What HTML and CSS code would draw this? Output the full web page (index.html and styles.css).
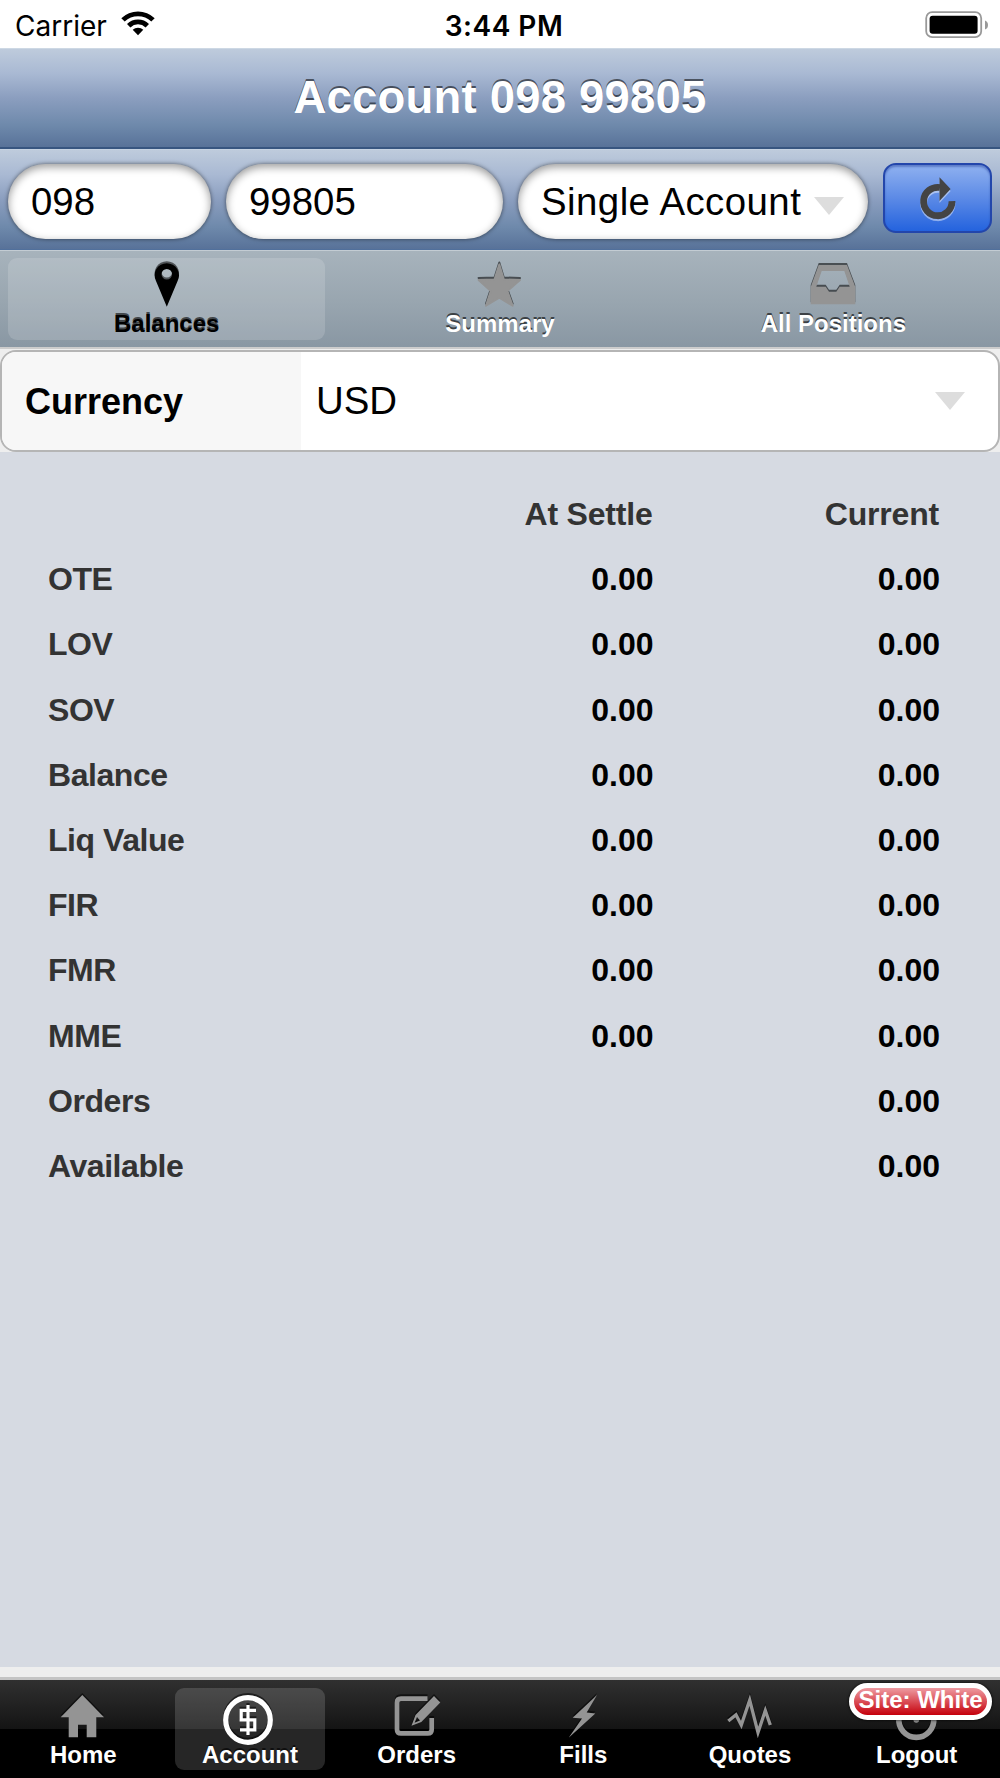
FILE: index.html
```html
<!DOCTYPE html>
<html lang="en">
<head>
  <meta charset="UTF-8">
  <meta name="viewport" content="width=device-width, initial-scale=1.0">
  <title>Account</title>
  <link rel="stylesheet" href="styles.css">
</head>
<body>
  <div class="status">
    <div class="carrier">
      <span>Carrier</span>
      <svg class="wifi" viewBox="0 0 34 25" width="34" height="25">
        <path d="M0.3 7.2 A24 24 0 0 1 33.7 7.2 L30.3 10.6 A19 19 0 0 0 3.7 10.6 Z"/>
        <path d="M6 13 A16 16 0 0 1 28 13 L24.6 16.4 A11 11 0 0 0 9.4 16.4 Z"/>
        <path d="M11.7 18.8 A7.6 7.6 0 0 1 22.3 18.8 L17 24.2 Z"/>
      </svg>
    </div>
    <span class="time">3:44 PM</span>
    <svg class="battery" viewBox="0 0 64 28" width="64" height="28">
      <rect x="1.2" y="1.2" width="55" height="25" rx="6" fill="none" stroke="#999" stroke-width="1.8"/>
      <rect x="4.6" y="4.7" width="48" height="18" rx="3"/>
      <path d="M60 9.5 Q63 10.5 63 14 Q63 17.5 60 18.5 Z" fill="#999"/>
    </svg>
  </div>

  <header class="toolbar">
    <h1>Account 098 99805</h1>
  </header>

  <form class="search">
    <input class="pill office" type="text" value="098">
    <input class="pill number" type="text" value="99805">
    <div class="pill type">Single Account <span class="arrow"></span></div>
    <button class="refresh" type="button">
      <svg viewBox="0 0 40 48" width="40" height="48">
        <path d="M34 27.2 A14.2 14.2 0 1 1 22 13.5" fill="none" stroke="#444" stroke-width="6.8"/>
        <path d="M21.5 3.3 L32.6 15 L21.5 27 Z" fill="#444"/>
      </svg>
    </button>
  </form>

  <nav class="tabs top-tabs">
    <a class="tab active">
      <svg class="icon" viewBox="0 0 52 52">
        <path fill-rule="evenodd" d="M25.8 48.7 L15 23 A12.2 12.2 0 1 1 36.6 23 Z M25.8 11 A5.3 5.3 0 1 0 25.8 21.6 A5.3 5.3 0 1 0 25.8 11 Z"/>
      </svg>
      <span>Balances</span>
    </a>
    <a class="tab">
      <svg class="icon" viewBox="0 0 52 52">
        <path class="star" d="M25.3 6.5 L29.8 21.5 L46 22 L33.4 33 L38.6 47.7 L25.3 39.7 L12 47.7 L16.8 33 L4.6 22 L20.5 21.5 Z"/>
      </svg>
      <span>Summary</span>
    </a>
    <a class="tab">
      <svg class="icon" viewBox="0 0 52 52">
        <path fill-rule="evenodd" d="M11.7 7 H40 L48.3 29 V46.3 H3.7 V29 Z M14.7 13 L9.3 28.7 H18.7 L22 33.7 H29.3 L32.7 28.7 H42.7 L37.3 13 Z"/>
      </svg>
      <span>All Positions</span>
    </a>
  </nav>

  <div class="field-wrap">
    <div class="field">
      <label>Currency</label>
      <div class="value">USD <span class="arrow"></span></div>
    </div>
  </div>

  <main>
    <table>
      <tr class="head"><th></th><th>At Settle</th><th>Current</th></tr>
      <tr><th>OTE</th><td>0.00</td><td>0.00</td></tr>
      <tr><th>LOV</th><td>0.00</td><td>0.00</td></tr>
      <tr><th>SOV</th><td>0.00</td><td>0.00</td></tr>
      <tr><th>Balance</th><td>0.00</td><td>0.00</td></tr>
      <tr><th>Liq Value</th><td>0.00</td><td>0.00</td></tr>
      <tr><th>FIR</th><td>0.00</td><td>0.00</td></tr>
      <tr><th>FMR</th><td>0.00</td><td>0.00</td></tr>
      <tr><th>MME</th><td>0.00</td><td>0.00</td></tr>
      <tr><th>Orders</th><td></td><td>0.00</td></tr>
      <tr><th>Available</th><td></td><td>0.00</td></tr>
    </table>
  </main>

  <nav class="tabs bottom-tabs">
    <a class="tab">
      <svg class="icon" viewBox="0 0 52 52">
        <path d="M25.3 6 L47 28.3 H39.3 V48.3 H29.7 V35.7 H21 V48.3 H11.7 V28.3 H3.7 Z"/>
      </svg>
      <span>Home</span>
    </a>
    <a class="tab active">
      <svg class="icon line" viewBox="0 0 52 52">
        <circle cx="24" cy="31" r="22.3" stroke-width="5.2"/>
        <path d="M32 21.3 H17.2 V30.8 H30.8 V40.8 H16 M24 16 V46" stroke-width="3.2"/>
      </svg>
      <span>Account</span>
    </a>
    <a class="tab">
      <svg class="icon" viewBox="0 0 52 52">
        <path class="stroke" d="M36.5 9.7 H10 Q6 9.7 6 13.7 V40.4 Q6 44.4 10 44.4 H36.7 Q40.7 44.4 40.7 40.4 V29" stroke-width="4.7"/>
        <path fill-rule="evenodd" d="M43 7 L49.3 13.5 L30.3 33 L20.5 36.8 L24.5 26 Z M26 28 L23.6 33.8 L29 31.5 Z"/>
      </svg>
      <span>Orders</span>
    </a>
    <a class="tab">
      <svg class="icon" viewBox="0 0 52 52">
        <path d="M40 6 L15.7 28.7 L25 29.5 L11.7 48.7 L38.3 24.5 L29.7 23.5 Z"/>
      </svg>
      <span>Fills</span>
    </a>
    <a class="tab">
      <svg class="icon line" viewBox="0 0 52 52">
        <path d="M4.3 32 L12 25.7 L17.3 36 L25.7 11 L34 43.5 L41.3 21.5 L46.3 36" stroke-width="3.3" stroke-miterlimit="10"/>
      </svg>
      <span>Quotes</span>
    </a>
    <a class="tab">
      <svg class="icon line" viewBox="0 0 52 52">
        <path d="M15 16.7 A17.5 17.5 0 1 0 35.6 16.7" stroke-width="5.6"/>
        <path d="M25.3 12 V31" stroke-width="5.6" stroke-linecap="round"/>
      </svg>
      <span>Logout</span>
      <b class="badge">Site: White</b>
    </a>
  </nav>
</body>
</html>
```

FILE: styles.css
```css
* {
  box-sizing: border-box;
}

body {
  margin: 0;
  height: 1778px;
  display: flex;
  flex-direction: column;
  background: #eee;
  color: #000;
  font-family: "Liberation Sans", Helvetica, Arial, sans-serif;
}

/* status bar */
.status {
  height: 48px;
  padding: 3px 11px 0 15px;
  display: grid;
  grid-template-columns: 1fr auto 1fr;
  align-items: center;
  background: #fff;
  font-family: Inter, sans-serif;
  font-size: 28px;
}

.carrier {
  display: flex;
  align-items: center;
  gap: 14px;
}

.wifi {
  margin-top: -4px;
}

.time {
  margin-left: 4px;
  font-weight: 600;
  font-size: 28px;
  letter-spacing: 0.5px;
}

.battery {
  justify-self: end;
  margin-top: -2px;
}

/* title and account search */
.toolbar,
.search {
  background: linear-gradient(#becbdc 0%, #a9b9d3 25%, #8b9ebf 50%, #6e89ab 78%, #587299 100%);
}

.toolbar {
  height: 101px;
  border-top: 1px solid #cdd8e4;
  border-bottom: 2px solid #375580;
}

h1 {
  margin: 0;
  color: #fff;
  font-size: 45.5px;
  letter-spacing: 0.2px;
  line-height: 97px;
  text-align: center;
  text-shadow: 0 -2px 0 rgba(0, 0, 0, 0.55);
}

.search {
  height: 101px;
  padding: 13px 8px 0;
  display: flex;
  align-items: flex-start;
  gap: 15px;
  border-top: 1px solid #c5d2e2;
  border-bottom: 1px solid #51709c;
}

.pill {
  height: 75px;
  margin-top: 1px;
  padding: 0 23px;
  border: 0;
  border-radius: 38px;
  background: #fff;
  color: #000;
  font-family: inherit;
  font-size: 38.4px;
  line-height: 73px;
  box-shadow: 0 0 4px rgba(0, 0, 0, 0.55), inset 0 3px 8px rgba(0, 0, 0, 0.4);
}

.office {
  width: 203px;
}

.number {
  width: 277px;
}

.type {
  width: 350px;
  display: flex;
  align-items: center;
  gap: 13px;
  letter-spacing: 0.45px;
  white-space: nowrap;
}

.arrow {
  border: 15px solid transparent;
  border-top: 18px solid #ddd;
  border-bottom: 0;
}

.type .arrow {
  margin-top: 8px;
}

.refresh {
  flex: 1;
  height: 70px;
  padding: 0;
  display: flex;
  align-items: center;
  justify-content: center;
  border: 2px solid #2346ab;
  border-radius: 13px;
  background: linear-gradient(#8fb1f0, #5c8ae6 50%, #2463de);
  box-shadow: inset 0 2px 2px rgba(30, 60, 150, 0.45);
}

.refresh svg {
  filter: drop-shadow(0 2px 0 rgba(255, 255, 255, 0.45));
}

/* tab bars */
.tabs {
  height: 97px;
  display: grid;
  grid-auto-flow: column;
  grid-auto-columns: 1fr;
}

.tab {
  position: relative;
  height: 82px;
  margin: 8px 8px 0;
  padding-top: 1px;
  display: flex;
  flex-direction: column;
  align-items: center;
  border-radius: 9px;
  color: #fff;
  fill: #949494;
  font-size: 24px;
  font-weight: bold;
  line-height: 28px;
  text-shadow: 0 -2px 0 rgba(0, 0, 0, 0.6);
}

.icon {
  width: 52px;
  height: 52px;
  flex: none;
  overflow: visible;
  filter: drop-shadow(0 -2px 0 rgba(0, 0, 0, 0.55));
}

.line,
.stroke {
  fill: none;
  stroke: #949494;
}

.star {
  stroke: #949494;
  stroke-width: 2px;
  stroke-linejoin: round;
}

.top-tabs {
  border-top: 1px solid #c3ccd3;
  background: linear-gradient(#a7b3bc, #98a5af 55%, #8997a3);
}

.top-tabs .tab {
  margin-top: 7px;
  padding-top: 0;
}

.top-tabs .active {
  background: rgba(255, 255, 255, 0.15);
  color: #000;
  fill: #000;
}

.badge {
  position: absolute;
  top: -5px;
  right: 0;
  width: 143px;
  height: 37px;
  border: 5px solid #fff;
  border-radius: 19px;
  background: linear-gradient(#ee9ba1, #da4d56 50%, #c5000c);
  line-height: 24px;
  text-align: center;
  text-shadow: none;
  white-space: nowrap;
  box-shadow: 0 0 3px #000;
}

/* currency */
.field-wrap {
  height: 105px;
  padding-top: 1px;
  border-top: 2px solid #ccc;
}

.field {
  height: 102px;
  display: flex;
  overflow: hidden;
  border: 2px solid #b5b5b5;
  border-radius: 16px;
  background: #fff;
  line-height: 98px;
}

.field label {
  width: 299px;
  padding-left: 23px;
  background: #f7f7f7;
  font-size: 36px;
  font-weight: bold;
  line-height: 100px;
}

.value {
  flex: 1;
  padding: 0 33px 0 15px;
  display: flex;
  align-items: center;
  justify-content: space-between;
  font-size: 38.4px;
}

/* balances */
main {
  height: 1215px;
  padding-top: 30px;
  background: #d6dae2;
}

table {
  width: 940px;
  table-layout: fixed;
  border-collapse: collapse;
  font-size: 32px;
}

th,
td {
  height: 65.2px;
  padding: 0;
  font-weight: bold;
  text-align: right;
}

th {
  color: #333;
  letter-spacing: -0.45px;
}

.head th {
  padding-right: 1px;
  letter-spacing: -0.2px;
}

th:first-child {
  width: 367px;
  padding-left: 48px;
  text-align: left;
}

/* bottom bar */
.bottom-tabs {
  height: 101px;
  margin-top: 10px;
  border-top: 3px solid #c4c4c4;
  background: linear-gradient(#303030, #141414 50%, #000 50%);
}

.bottom-tabs .active {
  background: rgba(255, 255, 255, 0.15);
}

.bottom-tabs .active .line {
  stroke: #fff;
}
```
